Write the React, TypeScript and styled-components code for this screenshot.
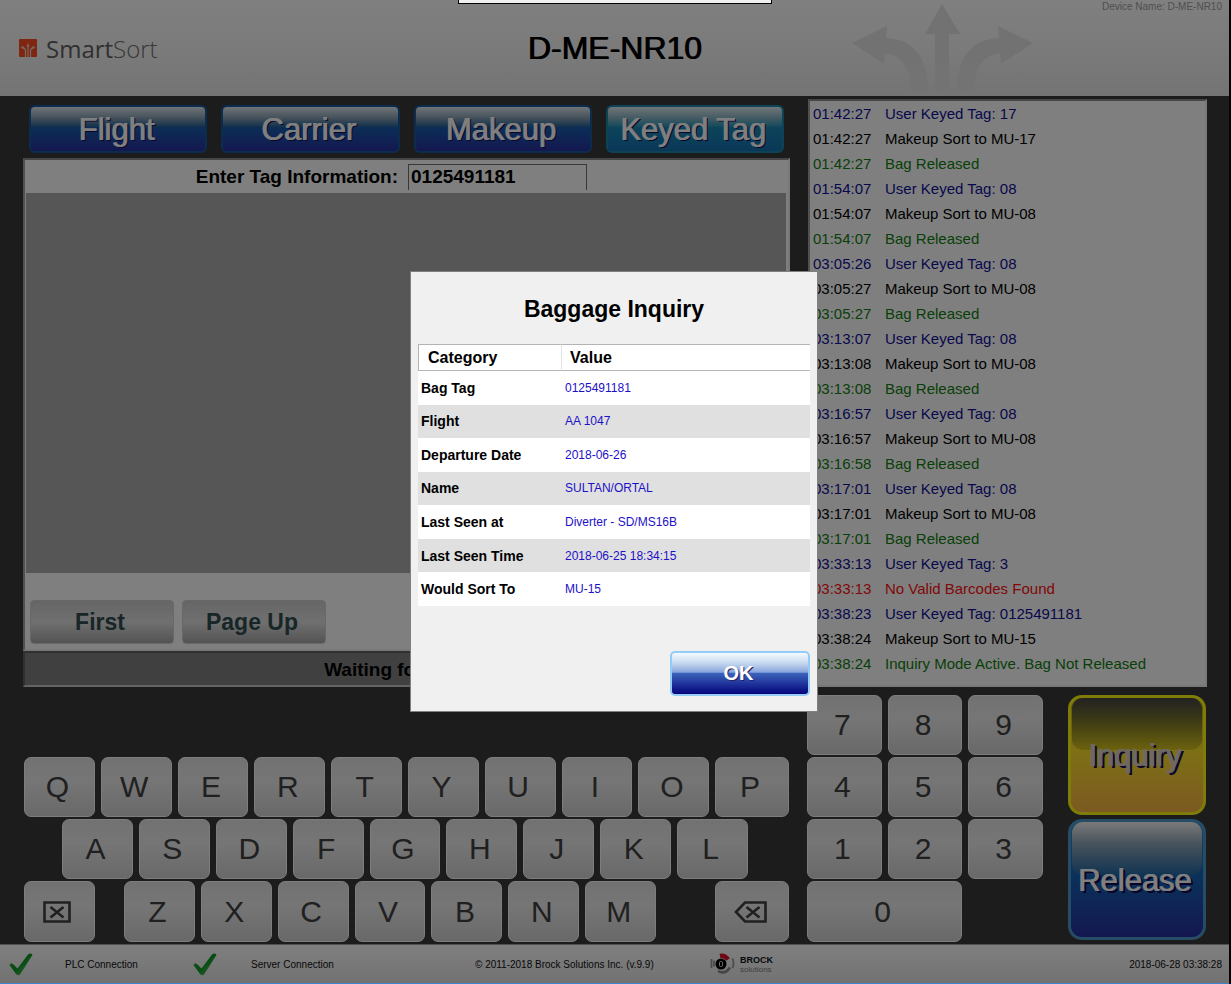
import React from "react";
import styled, { createGlobalStyle, css } from "styled-components";

const SANS = '"Liberation Sans", Arial, Helvetica, sans-serif';

const GlobalStyle = createGlobalStyle`
  *, *::before, *::after { box-sizing: border-box; }
  html, body { margin: 0; background: #000; }
  body { font-family: ${SANS}; color: #000; }
  button, input { font-family: inherit; }
`;

const Screen = styled.div`
  position: relative;
  display: flex;
  flex-direction: column;
  min-height: 100vh;
  margin-right: 2px;
  background: #383838;
  border-bottom: 1px solid #3a84cc;
`;

const WindowHandle = styled.div`
  position: absolute;
  top: 0;
  left: 50%;
  width: 314px;
  height: 4px;
  transform: translateX(-50%);
  background: #f0f0f0;
  border: 1px solid #000;
  border-top: 0;
  z-index: 3;
`;

const Header = styled.header`
  display: grid;
  grid-template-columns: repeat(3, 1fr);
  height: 96px;
  padding: 0 7px;
  background: linear-gradient(#ffffff, #f6f6f6 50%, #e8e8e8);
`;

const Brand = styled.div`
  display: flex;
  align-items: center;
  gap: 8px;
  padding-left: 12px;
  font-family: "Open Sans", "Noto Sans", sans-serif;
  font-size: 24px;
  font-weight: 400;
  color: #606060;
`;

const BrandLight = styled.span`
  font-weight: 300;
  color: #707070;
`;

const StationTitle = styled.h1`
  margin: 0;
  font-size: 32px;
  line-height: 96px;
  font-weight: 400;
  text-align: center;
  text-shadow: 1px 0 0 #000;
  white-space: nowrap;
`;

const HeaderEnd = styled.div`
  display: flex;
  justify-content: space-between;
  padding: 4px 0 0 35px;
`;

const DeviceName = styled.span`
  font-size: 10px;
  line-height: 6px;
  color: #a0a0a0;
  white-space: nowrap;
`;

const Columns = styled.div`
  display: grid;
  grid-template-columns: 767fr 399fr;
  column-gap: 18px;
  padding: 0 22px 0 23px;
`;

const Workspace = styled(Columns)`
  flex: 1;
  padding-top: 3px;
`;

const SortColumn = styled.section`
  display: flex;
  flex-direction: column;
`;

const Tabs = styled.nav`
  display: grid;
  grid-template-columns: repeat(4, 1fr);
  gap: 14px;
  padding: 6px 6px 5px;
`;

const Tab = styled.button<{ $active?: boolean }>`
  height: 48px;
  padding: 0 4px 0 0;
  border: 2px solid ${(p) => (p.$active ? "#1c84ac" : "#16589a")};
  border-radius: 6px;
  font-size: 31px;
  line-height: 43px;
  color: #fff;
  text-shadow: 1px 0 0 #fff, 2px 1px 0 #14084c;
  background: ${(p) =>
    p.$active
      ? "linear-gradient(#e0ecf0, #8cb8c8 24%, #2c96b8 44%, #1a88b4 46%, #1470b0)"
      : "linear-gradient(#e0e8ee, #8ca4b8 24%, #2c6498 44%, #185cac 46%, #2830a0)"};
`;

const inset = css`
  border: 2px solid;
  border-color: #8c8c8c #f0f0f0 #f0f0f0 #a0a0a0;
`;

const TagPanel = styled.div`
  ${inset}
  flex: 1;
  display: flex;
  flex-direction: column;
  background: #fff;
`;

const TagForm = styled.form`
  display: grid;
  grid-template-columns: 378fr 385fr;
  column-gap: 10px;
  height: 33px;
  align-items: center;
`;

const TagLabel = styled.label`
  font-size: 19px;
  font-weight: 700;
  text-align: right;
`;

const TagInput = styled.input`
  width: 179px;
  height: 26px;
  padding: 2px;
  border: 1px solid #707070;
  border-bottom: 0;
  outline: 0;
  background: #fff;
  font-size: 19px;
  font-weight: 700;
`;

const ResultArea = styled.div`
  flex: 1;
  min-height: 120px;
  margin: 0 2px 0 1px;
  background: #acacac;
`;

const Pager = styled.div`
  display: flex;
  gap: 8px;
  padding: 27px 5px 5px;
`;

const PageButton = styled.button`
  width: 144px;
  height: 44px;
  padding: 0 4px 0 0;
  border: 1px solid #d0d0d0;
  border-radius: 4px;
  background: linear-gradient(#cccccc, #e0e0e0 50%, #a8a8a8);
  color: #304c50;
  font-size: 23px;
  font-weight: 700;
`;

const Status = styled.p`
  margin: 0;
  height: 36px;
  padding-left: 39%;
  border: 2px solid;
  border-color: #606060 #f0f0f0 #c8c8c8 #606060;
  background: #808080;
  font-size: 19px;
  line-height: 33px;
  font-weight: 700;
`;

const LogPanel = styled.section`
  ${inset}
  padding: 0 3px;
  background: #fff;
`;

type Tone = "user" | "sort" | "ok" | "error";

const tones: Record<Tone, string> = {
  user: "#101098",
  sort: "#000000",
  ok: "#108010",
  error: "#ff1010",
};

const LogTable = styled.table`
  width: 100%;
  border-collapse: collapse;
  table-layout: fixed;
  font-size: 15px;
`;

const LogRow = styled.tr<{ $tone: Tone }>`
  color: ${(p) => tones[p.$tone]};
  td {
    height: 25px;
    padding: 0;
    white-space: nowrap;
  }
  td:first-child { width: 72px; }
`;

const Controls = styled(Columns)`
  padding-top: 8px;
  padding-bottom: 2px;
`;

const keyRows = css`
  display: grid;
  grid-template-rows: 60px 60px 60px 61px;
  row-gap: 2px;
`;

const Keyboard = styled.div`
  ${keyRows}
  padding: 0 1px;
`;

const KeyRow = styled.div<{ $columns: string; $inset?: boolean }>`
  display: grid;
  grid-template-columns: ${(p) => p.$columns};
  column-gap: 6px;
  padding: ${(p) => (p.$inset ? "0 41px 0 38px" : "0")};
`;

const Key = styled.button<{ $wide?: boolean }>`
  display: flex;
  align-items: center;
  justify-content: center;
  min-width: 0;
  padding: 0 4px 0 0;
  grid-column: ${(p) => (p.$wide ? "span 2" : "auto")};
  border: 1px solid #fafafa;
  border-radius: 7px;
  background: linear-gradient(#e4e4e4, #ececec 40%, #d2d2d2);
  color: #404040;
  font-size: 30px;
`;

const RightControls = styled.div`
  display: grid;
  grid-template-columns: 236fr 138fr;
  column-gap: 25px;
  margin: 0 1px 0 -1px;
`;

const NumberPad = styled.div`
  ${keyRows}
  grid-template-columns: repeat(3, 1fr);
  column-gap: 6px;
`;

const ActionStack = styled.div`
  display: grid;
  grid-template-rows: 120px 121px;
  row-gap: 4px;
`;

const ActionButton = styled.button<{ $kind: "inquiry" | "release" }>`
  position: relative;
  padding: 2px 5px 0 0;
  border: 3px solid ${(p) => (p.$kind === "inquiry" ? "#fff810" : "#4c98cc")};
  border-radius: 14px;
  color: ${(p) => (p.$kind === "inquiry" ? "#d8d0c8" : "#fff")};
  font-size: 31px;
  text-shadow: ${(p) =>
    p.$kind === "inquiry"
      ? "1px 0 0 #d8d0c8, 3px 2px 0 #180c60"
      : "1px 0 0 #fff, 3px 2px 0 #100850"};
  background: ${(p) =>
    p.$kind === "inquiry"
      ? "linear-gradient(#b8a81c, #fce02c 46%, #f8b444)"
      : "linear-gradient(#3c88c4, #1464b4 46%, #2830a0)"};

  &::before {
    content: "";
    position: absolute;
    inset: 0 1px auto;
    height: 46%;
    border-radius: 11px;
    background: ${(p) =>
      p.$kind === "inquiry"
        ? "linear-gradient(#444444, #74702c 40%, #d8c41c)"
        : "linear-gradient(#f4f4f4, #90a8b8 40%, #2468a4)"};
  }
`;

const ActionText = styled.span`
  position: relative;
`;

const Footer = styled.footer`
  display: grid;
  grid-template-columns: 184fr 282fr 235fr 528fr;
  align-items: center;
  height: 39px;
  border-top: 1px solid #a0a0a0;
  background: linear-gradient(#ffffff, #e4e4e4);
  font-size: 10px;
  color: #101010;
  white-space: nowrap;
`;

const FooterItem = styled.div<{ $gap?: number }>`
  display: flex;
  align-items: center;
  gap: ${(p) => p.$gap ?? 0}px;
  padding-left: 9px;
`;

const FooterEnd = styled(FooterItem)`
  justify-content: space-between;
  padding-right: 7px;
`;

const BrockLogo = styled.div`
  display: flex;
  align-items: center;
  gap: 5px;
`;

const BrockName = styled.strong`
  display: block;
  font-size: 9px;
  line-height: 10px;
`;

const BrockSub = styled.span`
  display: block;
  font-size: 8px;
  line-height: 9px;
  color: #808080;
`;

const Backdrop = styled.div`
  position: absolute;
  inset: 0;
  z-index: 2;
  display: flex;
  align-items: center;
  justify-content: center;
  padding-right: 1px;
  background: rgba(0, 0, 0, 0.5);
`;

const Dialog = styled.div`
  display: flex;
  flex-direction: column;
  width: 408px;
  padding: 0 7px 15px;
  border: 1px solid #808080;
  background: #f0f0f0;
`;

const DialogTitle = styled.h2`
  margin: 0;
  padding-top: 2px;
  font-size: 23px;
  line-height: 70px;
  text-align: center;
`;

const InquiryTable = styled.table`
  width: 100%;
  height: 262px;
  table-layout: fixed;
  border-collapse: separate;
  border-spacing: 0;
  background: #fff;
  text-align: left;

  thead th {
    height: 27px;
    padding: 0 0 0 8px;
    border: solid #b4b4b4;
    border-width: 1px 0;
    font-size: 16px;
  }
  thead th:first-child {
    width: 144px;
    padding-left: 9px;
    border-left-width: 1px;
    border-right: 1px solid #e4e4e4;
  }
  tbody th, tbody td { padding: 0 0 0 3px; }
  tbody th { font-size: 14px; }
  tbody td { font-size: 12px; color: #1c10c8; }
  tbody tr:nth-child(even) { background: #e0e0e0; }
`;

const OkButton = styled.button`
  align-self: flex-end;
  width: 140px;
  height: 45px;
  margin-top: 45px;
  padding: 0 3px 0 0;
  border: 2px solid #94ccf8;
  border-radius: 5px;
  background: linear-gradient(#f4faff, #c8daf0 24%, #88a4dc 47%, #3c64bc 49%, #04047c);
  color: #fff;
  font-size: 20px;
  font-weight: 700;
  text-shadow: 1px 1px 0 #28205c;
`;

const log: [string, string, Tone][] = [
  ["01:42:27", "User Keyed Tag: 17", "user"],
  ["01:42:27", "Makeup Sort to MU-17", "sort"],
  ["01:42:27", "Bag Released", "ok"],
  ["01:54:07", "User Keyed Tag: 08", "user"],
  ["01:54:07", "Makeup Sort to MU-08", "sort"],
  ["01:54:07", "Bag Released", "ok"],
  ["03:05:26", "User Keyed Tag: 08", "user"],
  ["03:05:27", "Makeup Sort to MU-08", "sort"],
  ["03:05:27", "Bag Released", "ok"],
  ["03:13:07", "User Keyed Tag: 08", "user"],
  ["03:13:08", "Makeup Sort to MU-08", "sort"],
  ["03:13:08", "Bag Released", "ok"],
  ["03:16:57", "User Keyed Tag: 08", "user"],
  ["03:16:57", "Makeup Sort to MU-08", "sort"],
  ["03:16:58", "Bag Released", "ok"],
  ["03:17:01", "User Keyed Tag: 08", "user"],
  ["03:17:01", "Makeup Sort to MU-08", "sort"],
  ["03:17:01", "Bag Released", "ok"],
  ["03:33:13", "User Keyed Tag: 3", "user"],
  ["03:33:13", "No Valid Barcodes Found", "error"],
  ["03:38:23", "User Keyed Tag: 0125491181", "user"],
  ["03:38:24", "Makeup Sort to MU-15", "sort"],
  ["03:38:24", "Inquiry Mode Active. Bag Not Released", "ok"],
];

const inquiry: [string, string][] = [
  ["Bag Tag", "0125491181"],
  ["Flight", "AA 1047"],
  ["Departure Date", "2018-06-26"],
  ["Name", "SULTAN/ORTAL"],
  ["Last Seen at", "Diverter - SD/MS16B"],
  ["Last Seen Time", "2018-06-25 18:34:15"],
  ["Would Sort To", "MU-15"],
];

const BrandIcon = () => (
  <svg width="19" height="19" viewBox="0 0 19 19" aria-hidden="true">
    <rect width="18" height="18" rx="1" fill="#ff4a20" />
    <g fill="none" stroke="#e8d8d0" strokeWidth="1.2">
      <path d="M9 18V7" />
      <path d="M6.500 18v-6q0-3-3-3.500" />
      <path d="M11.500 18v-6q0-3 3-3.500" />
    </g>
    <path d="M9 4l1.500 3.500h-3zM1.500 8.500l3-1.700v3.400zM16.500 8.500l-3-1.700v3.400z" fill="#e8d8d0" />
  </svg>
);

const SortArrows = () => (
  <svg width="181" height="87" viewBox="0 0 181 87" aria-hidden="true">
    <defs>
      <linearGradient id="fade" x1="0" y1="0" x2="0" y2="87" gradientUnits="userSpaceOnUse">
        <stop offset="0.6" stopColor="#e4e4e4" />
        <stop offset="1" stopColor="#e4e4e4" stopOpacity="0.5" />
      </linearGradient>
      <path id="turn" d="M0 39L35 22L34 34C60 35 76 52 76 87H59C58 64 50 50 33 50L32 60Z" />
    </defs>
    <g fill="url(#fade)">
      <use href="#turn" />
      <use href="#turn" transform="matrix(-1 0 0 1 181 0)" />
      <path d="M90 0L108 30H97V87H83V30H73Z" />
    </g>
  </svg>
);

const Check = () => (
  <svg width="24" height="24" viewBox="0 0 24 24" aria-hidden="true">
    <defs>
      <linearGradient id="tick" x1="0" y1="0" x2="1" y2="1">
        <stop offset="0" stopColor="#28a030" />
        <stop offset="0.5" stopColor="#109828" />
        <stop offset="1" stopColor="#70d070" />
      </linearGradient>
    </defs>
    <path d="M0.500 13Q2 10.500 4.500 12.500L8.500 16.500L19 2.500Q22 0.500 23.500 3L11 22.500Q9 24 7 22Z" fill="url(#tick)" />
  </svg>
);

const ClearIcon = () => (
  <svg width="28" height="22" viewBox="0 0 28 22" fill="none" stroke="#404040" strokeWidth="2.600" role="img" aria-label="Clear">
    <path d="M1.500 1.500h25v19h-25zM7.500 6l13 10.500M20.500 6l-13 10.500" />
  </svg>
);

const BackspaceIcon = () => (
  <svg width="33" height="22" viewBox="0 0 33 22" fill="none" stroke="#404040" strokeWidth="2.600" role="img" aria-label="Backspace">
    <path d="M2 11L11 1.500H31.500V20.500H11ZM12.500 6l13 10.500M25.500 6l-13 10.500" />
  </svg>
);

const BrockMark = () => (
  <svg width="25" height="22" viewBox="0 0 25 22" fill="none" aria-hidden="true">
    <circle cx="11" cy="11" r="5.500" fill="#000" />
    <rect x="9.500" y="8.500" width="3" height="5" rx="1" stroke="#ddd" />
    <path d="M10 3Q15 2 18 6.500" stroke="#e01028" strokeWidth="4.500" />
    <path d="M8 18Q15 22 20 14.500" stroke="#888" strokeWidth="2.500" />
    <path d="M1.500 6v9M4 7.500v6M22.500 5.500q2 5 0 9.500" stroke="#999" strokeWidth="1.800" />
  </svg>
);

const letters = (row: string) => row.split("").map((c) => <Key key={c} type="button">{c}</Key>);

export default function App() {
  return (
    <>
      <GlobalStyle />
      <Screen>
        <WindowHandle />
        <Header>
          <Brand>
            <BrandIcon />
            <span>Smart<BrandLight>Sort</BrandLight></span>
          </Brand>
          <StationTitle>D-ME-NR10</StationTitle>
          <HeaderEnd>
            <SortArrows />
            <DeviceName>Device Name: D-ME-NR10</DeviceName>
          </HeaderEnd>
        </Header>

        <Workspace>
          <SortColumn>
            <Tabs>
              <Tab type="button">Flight</Tab>
              <Tab type="button">Carrier</Tab>
              <Tab type="button">Makeup</Tab>
              <Tab type="button" $active>Keyed Tag</Tab>
            </Tabs>
            <TagPanel>
              <TagForm>
                <TagLabel htmlFor="tag">Enter Tag Information:</TagLabel>
                <TagInput id="tag" defaultValue="0125491181" />
              </TagForm>
              <ResultArea />
              <Pager>
                <PageButton type="button">First</PageButton>
                <PageButton type="button">Page Up</PageButton>
              </Pager>
            </TagPanel>
            <Status>Waiting for</Status>
          </SortColumn>
          <LogPanel>
            <LogTable>
              <tbody>
                {log.map(([time, text, tone], i) => (
                  <LogRow key={i} $tone={tone}>
                    <td>{time}</td>
                    <td>{text}</td>
                  </LogRow>
                ))}
              </tbody>
            </LogTable>
          </LogPanel>
        </Workspace>

        <Controls>
          <Keyboard>
            <span />
            <KeyRow $columns="repeat(9, 71fr) 74fr">{letters("QWERTYUIOP")}</KeyRow>
            <KeyRow $columns="repeat(9, 1fr)" $inset>{letters("ASDFGHJKL")}</KeyRow>
            <KeyRow $columns="71fr 17fr repeat(7, 71fr) 47fr 74fr">
              <Key type="button"><ClearIcon /></Key>
              <span />
              {letters("ZXCVBNM")}
              <span />
              <Key type="button"><BackspaceIcon /></Key>
            </KeyRow>
          </Keyboard>
          <RightControls>
            <NumberPad>
              {letters("789456123")}
              <Key type="button" $wide>0</Key>
            </NumberPad>
            <ActionStack>
              <ActionButton type="button" $kind="inquiry"><ActionText>Inquiry</ActionText></ActionButton>
              <ActionButton type="button" $kind="release"><ActionText>Release</ActionText></ActionButton>
            </ActionStack>
          </RightControls>
        </Controls>

        <Footer>
          <FooterItem $gap={32}><Check />PLC Connection</FooterItem>
          <FooterItem $gap={34}><Check />Server Connection</FooterItem>
          <FooterItem>© 2011-2018 Brock Solutions Inc. (v.9.9)</FooterItem>
          <FooterEnd>
            <BrockLogo>
              <BrockMark />
              <div>
                <BrockName>BROCK</BrockName>
                <BrockSub>solutions</BrockSub>
              </div>
            </BrockLogo>
            <time>2018-06-28 03:38:28</time>
          </FooterEnd>
        </Footer>

        <Backdrop>
          <Dialog role="dialog" aria-modal="true" aria-labelledby="inquiry-title">
            <DialogTitle id="inquiry-title">Baggage Inquiry</DialogTitle>
            <InquiryTable>
              <thead>
                <tr><th scope="col">Category</th><th scope="col">Value</th></tr>
              </thead>
              <tbody>
                {inquiry.map(([name, value]) => (
                  <tr key={name}><th scope="row">{name}</th><td>{value}</td></tr>
                ))}
              </tbody>
            </InquiryTable>
            <OkButton type="button">OK</OkButton>
          </Dialog>
        </Backdrop>
      </Screen>
    </>
  );
}
